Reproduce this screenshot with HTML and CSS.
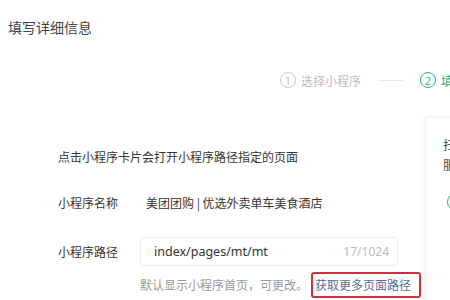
FILE: index.html
```html
<!DOCTYPE html>
<html lang="zh-CN">

<head>
  <meta charset="UTF-8" />
  <meta name="viewport" content="width=device-width, initial-scale=1.0" />
  <title>填写详细信息</title>
  <link rel="stylesheet" href="styles.css">
</head>

<body>
  <div class="page">
    <h1 class="title">填写详细信息</h1>
    <div class="steps">
      <div class="step">
        <span class="step-num">1</span>
        <span class="step-text">选择小程序</span>
      </div>
      <div class="step-line"></div>
      <div class="step step-active">
        <span class="step-num">2</span>
        <span class="step-text">填写详细信息</span>
      </div>
    </div>
    <div class="main">
      <div class="form">
        <p class="desc">点击小程序卡片会打开小程序路径指定的页面</p>
        <div class="row">
          <label class="label">小程序名称</label>
          <div class="value">美团团购 | 优选外卖单车美食酒店</div>
        </div>
        <div class="row row-path">
          <label class="label">小程序路径</label>
          <div class="field">
            <div class="input">
              <span class="input-text">index/pages/mt/mt</span>
              <span class="counter">17/1024</span>
            </div>
            <div class="hint">
              默认显示小程序首页，可更改。<a class="more-link">获取更多页面路径</a>
            </div>
          </div>
        </div>
      </div>
      <div class="preview">
        <p class="preview-line">扫码体验</p>
        <p class="preview-line">服务</p>
        <span class="preview-dot"></span>
      </div>
    </div>
  </div>
</body>

</html>
```

FILE: styles.css
```css
body {
  margin: 0;
  background: #fff;
  font-family: "Noto Sans CJK SC", "Noto Sans", sans-serif;
  color: #353535;
  overflow: hidden;
}
.page {
  width: 450px;
  height: 300px;
  overflow: hidden;
}
.title {
  margin: 0;
  padding: 16px 0 0 8px;
  font-size: 14px;
  font-weight: normal;
  line-height: 22px;
  color: #444;
}
.steps {
  display: flex;
  align-items: center;
  padding: 32px 0 0 280px;
  white-space: nowrap;
  height: 20px;
}
.step {
  display: flex;
  flex-shrink: 0;
  align-items: center;
  gap: 5px;
  color: #bdbdbd;
  font-size: 12px;
}
.step-num {
  width: 14px;
  height: 14px;
  flex-shrink: 0;
  border: 1px solid #c8c8c8;
  border-radius: 50%;
  display: flex;
  align-items: center;
  justify-content: center;
  font-size: 11px;
  font-family: "Open Sans", sans-serif;
  color: #bbb;
}
.step-line {
  width: 25px;
  height: 1px;
  flex-shrink: 0;
  background: #e8e8e8;
  margin: 0 17px;
}
.step-active,
.step-active .step-num {
  color: #2bb673;
  border-color: #2bb673;
}
.main {
  display: flex;
  padding-top: 24px;
}
.form {
  width: 367px;
  flex-shrink: 0;
  padding: 34px 0 0 58px;
  font-size: 12px;
}
.desc {
  margin: 0;
  line-height: 18px;
}
.row {
  display: flex;
  align-items: center;
  margin-top: 28px;
}
.label {
  width: 82px;
  flex-shrink: 0;
  line-height: 18px;
}
.value {
  line-height: 18px;
  padding-left: 6px;
}
.row-path {
  align-items: flex-start;
  margin-top: 25px;
}
.row-path .label {
  margin-top: 6px;
}
.field {
  display: flex;
  flex-direction: column;
}
.input {
  width: 258px;
  height: 29px;
  border: 1px solid #ececec;
  border-radius: 4px;
  display: flex;
  align-items: center;
  justify-content: space-between;
  padding: 0 8px 0 13px;
  box-sizing: border-box;
}
.input-text {
  font-family: "Noto Sans", sans-serif;
  font-size: 12.5px;
  color: #333;
}
.counter {
  font-family: "Noto Sans", sans-serif;
  font-size: 12px;
  color: #bbb;
}
.hint {
  margin-top: 6px;
  color: #999;
  line-height: 18px;
  white-space: nowrap;
}
.more-link {
  display: inline-block;
  margin-left: 3px;
  padding: 2px 8px 2px 2px;
  border: 2px solid #d0313a;
  border-radius: 3px;
  color: #5b6d91;
}
.preview {
  margin-top: 3px;
  width: 200px;
  height: 200px;
  flex-shrink: 0;
  border: 1px solid #eee;
  box-shadow: 0 0 6px rgba(0, 0, 0, 0.06);
  padding: 17px 0 0 17px;
  box-sizing: border-box;
}
.preview-line {
  margin: 0;
  font-size: 12px;
  line-height: 20px;
  color: #444;
}
.preview-dot {
  display: block;
  margin-top: 18px;
  margin-left: 4px;
  width: 16px;
  height: 16px;
  border: 1px solid #2bb673;
  border-radius: 50%;
}
```
